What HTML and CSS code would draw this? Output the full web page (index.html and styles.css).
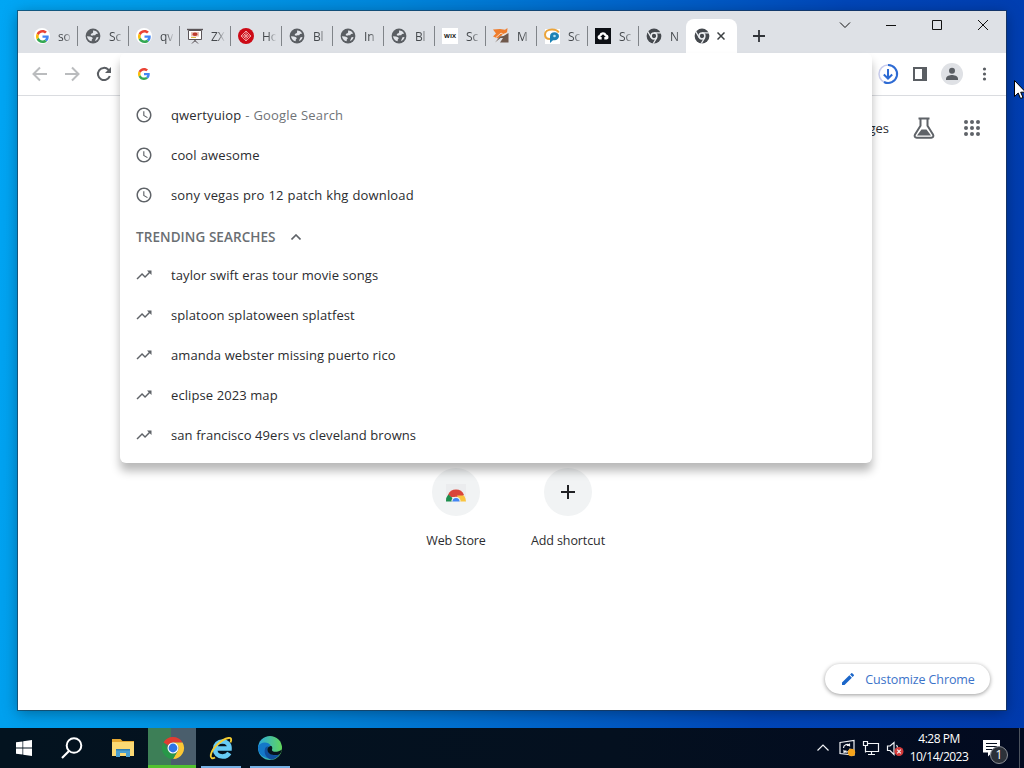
FILE: index.html
```
<!DOCTYPE html>
<html lang="en">
<head>
    <meta charset="UTF-8">
    <meta name="viewport" content="width=device-width, initial-scale=1.0">
    <title>New Tab</title>
    <link rel="stylesheet" href="styles.css">
</head>
<body>
    <!-- Shared icons -->
    <svg class="icon-defs" width="0" height="0">
        <symbol id="google" viewBox="0 0 48 48">
            <path fill="#EA4335" d="M24 9.5c3.54 0 6.71 1.22 9.21 3.6l6.85-6.85C35.9 2.38 30.47 0 24 0 14.62 0 6.51 5.38 2.56 13.22l7.98 6.19C12.43 13.72 17.74 9.5 24 9.5z"/>
            <path fill="#4285F4" d="M46.98 24.55c0-1.57-.15-3.09-.38-4.55H24v9.02h12.94c-.58 2.96-2.26 5.48-4.78 7.18l7.73 6c4.51-4.18 7.09-10.36 7.09-17.65z"/>
            <path fill="#FBBC05" d="M10.53 28.59c-.48-1.45-.76-2.99-.76-4.59s.27-3.14.76-4.59l-7.98-6.19C.92 16.46 0 20.12 0 24c0 3.88.92 7.54 2.56 10.78l7.97-6.19z"/>
            <path fill="#34A853" d="M24 48c6.48 0 11.93-2.13 15.89-5.81l-7.73-6c-2.15 1.45-4.92 2.3-8.16 2.3-6.26 0-11.57-4.22-13.47-9.91l-7.98 6.19C6.51 42.62 14.62 48 24 48z"/>
        </symbol>
        <symbol id="globe" viewBox="0 0 16 16">
            <circle cx="8" cy="8" r="7.4" fill="#5a5e63"/>
            <path fill="#e1e4e9" d="M8 2.500c2-.2 4.300 1 5 3.200L11 6l-.8 1.300-1.700-.1-1.500.6L5.600 7l.6-1.300 1.600-.6.3-1zM2 8.300l3 .2 2 .8.900 1-1 1-.3 2C4.200 12.800 2.200 11 2 8.300zM11.500 9.300l2-.3c-.3 1.800-1.200 3-2.600 3.800l-1-.4.800-1.200z"/>
        </symbol>
        <symbol id="chrome-mono" viewBox="0 0 16 16">
            <circle cx="8" cy="8" r="7.400" fill="#45494e"/>
            <circle cx="8" cy="8" r="2.900" fill="#45494e" stroke="#eceef1" stroke-width="1.500"/>
            <path stroke="#eceef1" stroke-width="1.300" fill="none" d="M8 4.900h7M5.300 9.600L1.700 3.500M10.700 9.600L7.300 15.500"/>
        </symbol>
        <symbol id="clock" viewBox="0 0 24 24">
            <path d="M11.990 2C6.470 2 2 6.480 2 12s4.470 10 9.990 10C17.520 22 22 17.520 22 12S17.520 2 11.990 2zM12 20c-4.420 0-8-3.580-8-8s3.580-8 8-8 8 3.580 8 8-3.580 8-8 8zm.5-13H11v6l5.250 3.150.75-1.230-4.500-2.670z"/>
        </symbol>
        <symbol id="trend" viewBox="0 0 24 24">
            <path d="M16 6l2.290 2.290-4.880 4.880-4-4L2 16.590 3.410 18l6-6 4 4 6.300-6.290L22 12V6z"/>
        </symbol>
    </svg>

    <div class="desktop">
        <div class="window">
            <!-- Tab strip -->
            <div class="tab-strip">
                <div class="tabs">
                    <div class="tab"><span class="favicon round"><svg width="13" height="13"><use href="#google"/></svg></span><span class="tab-title">so</span></div>
                    <div class="tab"><svg class="favicon"><use href="#globe"/></svg><span class="tab-title">Sc</span></div>
                    <div class="tab"><span class="favicon round"><svg width="13" height="13"><use href="#google"/></svg></span><span class="tab-title">qv</span></div>
                    <div class="tab">
                        <svg class="favicon" viewBox="0 0 16 16">
                            <path fill="#fff" stroke="#5b5558" d="M1.500 2.500h13v9h-13z"/>
                            <path stroke="#5b5558" stroke-width="1.400" d="M0 1.500h16"/>
                            <path fill="none" stroke="#5b5558" d="M8 12v2M8 12.500l-3 3M8 12.500l3 3"/>
                            <path fill="#e9c4b8" d="M4 4h8v4.500H4z"/>
                            <ellipse cx="8" cy="6.200" rx="2.600" ry="1.800" fill="#bd3a2c"/>
                            <path stroke="#d9bd42" d="M4 9.500h5"/>
                        </svg>
                        <span class="tab-title">ZX</span>
                    </div>
                    <div class="tab">
                        <svg class="favicon" viewBox="0 0 16 16">
                            <circle cx="8" cy="8" r="8" fill="#cd0a16"/>
                            <path fill="none" stroke="#f4b9b9" stroke-width=".8" d="M8 3L13 8 8 13 3 8zM8 5.500L10.500 8 8 10.500 5.500 8zM8 3v2.500M8 10.500V13M3 8h2.500M10.500 8H13M5.500 5.500l5 5M10.500 5.500l-5 5"/>
                        </svg>
                        <span class="tab-title">Ho</span>
                    </div>
                    <div class="tab"><svg class="favicon"><use href="#globe"/></svg><span class="tab-title">Bl</span></div>
                    <div class="tab"><svg class="favicon"><use href="#globe"/></svg><span class="tab-title">In</span></div>
                    <div class="tab"><svg class="favicon"><use href="#globe"/></svg><span class="tab-title">Bl</span></div>
                    <div class="tab"><span class="favicon wix">WIX</span><span class="tab-title">Sc</span></div>
                    <div class="tab">
                        <svg class="favicon" viewBox="0 0 16 16">
                            <path fill="#ef7d2d" d="M0 1.500l7-.5 5 .8L14.500 0 14 5l-3 .5L5 10.500 0 8.500l3-3z"/>
                            <path fill="#70594c" d="M15.500 5v9.500H7l3-4.500H7.500L2 14.500 7 8.500l3.500-.5z"/>
                            <path stroke="#f6e3d4" stroke-width=".9" d="M3 9.500l5-4.500 3 2 3-2.500" fill="none"/>
                        </svg>
                        <span class="tab-title">M</span>
                    </div>
                    <div class="tab">
                        <svg class="favicon" viewBox="0 0 16 16">
                            <path fill="#fff" d="M1 1h15v15H1z"/>
                            <path fill="none" stroke="#eba43a" stroke-width="2" d="M6 11C2 11 1 8.500 1 6.500 1 3.500 4 1.500 8 1.500s6 1.500 6.800 3"/>
                            <path fill="#1c83b5" d="M6 15V8.500C6 5.500 8 4.300 10.500 4.300S15 6 15 8.200s-2 4-4.500 4H9z"/>
                            <circle cx="10.500" cy="8" r="1.300" fill="#b5dff2"/>
                        </svg>
                        <span class="tab-title">Sc</span>
                    </div>
                    <div class="tab">
                        <svg class="favicon" viewBox="0 0 16 16">
                            <path fill="#0d1015" d="M0 0h16v16H0z"/>
                            <path fill="#fff" d="M4.500 11.500a2.300 2.300 0 0 1-.2-4.500A3.800 3.800 0 0 1 11.500 6.500a2.600 2.600 0 0 1 .3 5H9.300V9h1.500L8 6.300 5.200 9h1.500v2.500z"/>
                        </svg>
                        <span class="tab-title">Sc</span>
                    </div>
                    <div class="tab last"><svg class="favicon"><use href="#chrome-mono"/></svg><span class="tab-title">N</span></div>
                    <div class="tab active">
                        <svg class="favicon"><use href="#chrome-mono"/></svg>
                        <svg class="tab-close" width="8" height="8" viewBox="0 0 8 8"><path d="M.5.5l7 7M7.500.5l-7 7"/></svg>
                    </div>
                </div>
                <svg class="new-tab" width="12" height="12" viewBox="0 0 12 12"><path d="M6 0v12M0 6h12"/></svg>
                <div class="caption-buttons">
                    <svg viewBox="0 0 46 28"><path d="M18 11.500l5 5 5-5"/></svg>
                    <svg viewBox="0 0 46 28"><path d="M18 14.500h10"/></svg>
                    <svg viewBox="0 0 46 28"><path d="M18.500 9.500h9v9h-9z"/></svg>
                    <svg viewBox="0 0 46 28"><path d="M18 9l10 10M28 9L18 19"/></svg>
                </div>
            </div>

            <!-- Toolbar -->
            <div class="toolbar">
                <svg class="tool disabled" viewBox="0 0 32 32"><path d="M23 16H10M16 9.500L9.500 16l6.500 6.500"/></svg>
                <svg class="tool disabled" viewBox="0 0 32 32"><path d="M9 16h13M16 9.500l6.500 6.500-6.500 6.500"/></svg>
                <svg class="tool" viewBox="0 0 32 32"><path d="M21.800 18a6.100 6.100 0 1 1-1.400-6.300l1.600 1.800"/><path class="fill" d="M23 9v6h-6z"/></svg>
                <div class="toolbar-right">
                    <svg class="tool download" viewBox="0 0 32 32">
                        <circle cx="16" cy="16" r="9"/>
                        <path d="M16 7a9 9 0 1 1-4 17M16 11v9M11.800 16.500L16 20.500l4.200-4"/>
                    </svg>
                    <svg class="tool" viewBox="0 0 32 32"><path d="M10 10h12v12H10z"/><path class="fill" d="M18 9h5v14h-5z"/></svg>
                    <svg class="tool" viewBox="0 0 32 32">
                        <circle class="avatar-bg" cx="16" cy="16" r="11"/>
                        <circle class="fill" cx="16" cy="12.700" r="3"/>
                        <path class="fill" d="M10 22v-1.500c0-2.500 4-3.500 6-3.500s6 1 6 3.500V22z"/>
                    </svg>
                    <svg class="tool" viewBox="0 0 32 32"><circle class="fill" cx="16.500" cy="11" r="1.600"/><circle class="fill" cx="16.500" cy="16" r="1.600"/><circle class="fill" cx="16.500" cy="21" r="1.600"/></svg>
                </div>
            </div>

            <!-- New tab page -->
            <div class="page">
                <div class="page-header">
                    <span>Images</span>
                    <svg class="flask" width="24" height="24" viewBox="0 0 24 24">
                        <path fill="none" stroke="#5f6368" stroke-width="2" stroke-linejoin="round" d="M8.500 2.800v7L3 18.500c-1 2 0 3.200 1.700 3.200h14.600c1.700 0 2.700-1.200 1.700-3.200L15.500 9.800v-7M6.500 2.400h11"/>
                        <path fill="#5f6368" d="M9.500 13.500h5l4.500 6H5z"/>
                    </svg>
                    <svg class="apps" width="16" height="16" viewBox="0 0 16 16">
                        <g fill="#5f6368">
                            <circle cx="2" cy="2" r="2"/><circle cx="8" cy="2" r="2"/><circle cx="14" cy="2" r="2"/>
                            <circle cx="2" cy="8" r="2"/><circle cx="8" cy="8" r="2"/><circle cx="14" cy="8" r="2"/>
                            <circle cx="2" cy="14" r="2"/><circle cx="8" cy="14" r="2"/><circle cx="14" cy="14" r="2"/>
                        </g>
                    </svg>
                </div>

                <div class="shortcuts">
                    <div class="shortcut">
                        <div class="shortcut-icon">
                            <svg width="24" height="24" viewBox="0 0 24 24">
                                <path fill="#ebecee" d="M2 4h20v13H2z"/>
                                <path fill="#d9453a" d="M4 15a8.600 8.600 0 0 1 16 0l-3 2H7z"/>
                                <path fill="#1e8e4e" d="M4.300 14.500A9 9 0 0 0 2 21.500h6.500V18z"/>
                                <path fill="#f9c440" d="M13 15.500h7A9 9 0 0 1 22 21.500h-7z"/>
                                <path fill="#eceef0" d="M7.300 21.500a4.700 4.700 0 0 1 9.400 0z"/>
                                <path fill="#4285f4" d="M8.500 21.500a3.500 3.500 0 0 1 7 0z"/>
                            </svg>
                        </div>
                        <span>Web Store</span>
                    </div>
                    <div class="shortcut">
                        <div class="shortcut-icon">
                            <svg width="14" height="14" viewBox="0 0 14 14"><path stroke="#202124" stroke-width="2" d="M7 0v14M0 7h14"/></svg>
                        </div>
                        <span>Add shortcut</span>
                    </div>
                </div>

                <button class="customize">
                    <svg width="16" height="16" viewBox="0 0 24 24"><path fill="#1b66c9" d="M3 17.250V21h3.750L17.810 9.940l-3.750-3.750L3 17.250zM20.710 7.040a1 1 0 0 0 0-1.410l-2.340-2.340a1 1 0 0 0-1.410 0l-1.830 1.830 3.750 3.750 1.830-1.830z"/></svg>
                    <span>Customize Chrome</span>
                </button>
            </div>

            <!-- Address bar suggestions -->
            <div class="suggestions">
                <div class="omnibox"><svg width="12" height="12"><use href="#google"/></svg></div>
                <div class="suggestion history"><svg><use href="#clock"/></svg><span>qwertyuiop <em>- Google Search</em></span></div>
                <div class="suggestion history"><svg><use href="#clock"/></svg><span>cool awesome</span></div>
                <div class="suggestion history"><svg><use href="#clock"/></svg><span>sony vegas pro 12 patch khg download</span></div>
                <div class="suggestion-header">
                    <span>TRENDING SEARCHES</span>
                    <svg width="10" height="6" viewBox="0 0 10 6"><path d="M.5 5.500L5 1l4.500 4.500"/></svg>
                </div>
                <div class="suggestion"><svg><use href="#trend"/></svg><span>taylor swift eras tour movie songs</span></div>
                <div class="suggestion"><svg><use href="#trend"/></svg><span>splatoon splatoween splatfest</span></div>
                <div class="suggestion"><svg><use href="#trend"/></svg><span>amanda webster missing puerto rico</span></div>
                <div class="suggestion"><svg><use href="#trend"/></svg><span>eclipse 2023 map</span></div>
                <div class="suggestion"><svg><use href="#trend"/></svg><span>san francisco 49ers vs cleveland browns</span></div>
            </div>
        </div>

        <svg class="cursor" width="13" height="20" viewBox="0 0 13 20"><path fill="#fff" stroke="#000" d="M.5.5v16l3.700-3.500 2.300 5.500 2.500-1-2.300-5.300h5z"/></svg>
    </div>

    <!-- Taskbar -->
    <div class="taskbar">
        <div class="task">
            <svg width="16" height="16" viewBox="0 0 16 16"><path fill="#fff" d="M0 2.300l6.500-.9v6.200H0zM7.200 1.300L16 0v7.600H7.200zM0 8.400h6.500v6.200L0 13.700zM7.200 8.400H16V16l-8.800-1.300z"/></svg>
        </div>
        <div class="task search">
            <svg width="22" height="22" viewBox="0 0 22 22"><circle cx="13" cy="8.500" r="7.300" fill="none" stroke="#fff" stroke-width="2"/><path stroke="#fff" stroke-width="2.200" d="M8 14l-7 7"/></svg>
        </div>
        <div class="task">
            <svg width="22" height="20" viewBox="0 0 22 20">
                <path fill="#e5a832" d="M0 1h8.500l2 2H22v5H0z"/>
                <path fill="#fbd974" d="M0 4h22v14H0z"/>
                <path fill="#4a9fd0" d="M4 11h14v8h-4v-4H8v4H4z"/>
                <path fill="#2f7db0" d="M4 11h14v1.500H4z"/>
            </svg>
        </div>
        <div class="task current">
            <svg width="24" height="24" viewBox="0 0 48 48">
                <path fill="#e03c31" d="M24 2a22 22 0 0 1 19.100 11H24a11 11 0 0 0-9.600 5.600L4.900 13A22 22 0 0 1 24 2z"/>
                <path fill="#fbc734" d="M43.100 13A22 22 0 0 1 24 46l9.500-16.500A11 11 0 0 0 33.500 18.500L24 13z"/>
                <path fill="#279848" d="M4.900 13l9.600 16.500A11 11 0 0 0 24 35c3 0 7-2 9.500-5.500L24 46A22 22 0 0 1 4.900 13z"/>
                <circle cx="24" cy="24" r="11" fill="#fff"/>
                <circle cx="24" cy="24" r="8.800" fill="#2f74e6"/>
            </svg>
        </div>
        <div class="task open">
            <svg width="24" height="24" viewBox="0 0 24 24">
                <path fill="none" stroke="#67cbf4" stroke-width="4.600" d="M6 12.500h14.500c.2-4.500-2.800-7-7-7S6 8.500 6 13s3.200 7.500 7.500 7.500c3.300 0 5.500-1.200 6.800-3.500"/>
                <path fill="none" stroke="#f4cd32" stroke-width="1.900" d="M21.500 6.500c1.500-3.500.5-5-2-4.500C12 3.500 3 12.500 1.800 19c-.6 3.500 1.700 4 4.200 2.500"/>
            </svg>
        </div>
        <div class="task open">
            <svg width="24" height="24" viewBox="0 0 24 24">
                <defs>
                    <linearGradient id="edge-top" x1="0" x2="1"><stop offset="0" stop-color="#2ba9df"/><stop offset="1" stop-color="#61d65b"/></linearGradient>
                </defs>
                <circle cx="12" cy="12" r="12" fill="url(#edge-top)"/>
                <path fill="#1478c8" d="M0 11c1.500-5 10-6.500 13-1-3 0-4 2-3.500 4 .8 4 6 5.500 12 4A12 12 0 0 1 0 11z"/>
                <path fill="#114f9d" d="M8 11c-3 4-1 11 5.500 12.800 3.500-.5 6.500-3 8-5.300-6 2-11.500-.5-12-4.500-.2-1.500.3-3 1.500-4z"/>
                <path fill="#06131d" d="M13.500 10c2 3-.5 3.500 1 5 2 1.500 6 1 9.500-1.500-.5 2-1.500 4-2.500 5-6 1.500-11.200 0-12-4-.4-2 .5-4.500 4-4.500z"/>
            </svg>
        </div>

        <div class="tray">
            <svg class="tray-icon" viewBox="0 0 24 24"><path d="M6.500 14.500L12 9l5.500 5.500"/></svg>
            <svg class="tray-icon" viewBox="0 0 24 24">
                <path d="M5 6.500l14-2v14.500l-14-1.500zM8.500 12a3.500 3.500 0 0 1 6-2.500V7.500M14.500 9.500h-2.500M15 12.500a3.500 3.500 0 0 1-6 2.500v2M9 15h2.500"/>
                <circle class="alert-dot" cx="16.500" cy="16.500" r="3.700"/>
            </svg>
            <svg class="tray-icon" viewBox="0 0 24 24"><path d="M9 7.500h10.500v8H6.500v-5M4.500 5.500h4v4h-4zM6.500 9.500v7M12.500 15.500v3M9 18.500h7"/></svg>
            <svg class="tray-icon" viewBox="0 0 24 24">
                <path d="M4.500 10v4.500h2.500l4 4v-12l-4 3.500zM13.500 9a5 5 0 0 1 1 3"/>
                <circle class="muted-dot" cx="16" cy="15.500" r="4.500"/>
                <path d="M14.200 13.700l3.600 3.600M17.800 13.700l-3.600 3.600"/>
            </svg>
            <div class="time"><span>4:28 PM</span><span>10/14/2023</span></div>
            <div class="notifications">
                <svg width="17" height="17" viewBox="0 0 17 17"><path fill="#fff" d="M0 0h17v12.500H9L5 16.500v-4H0z"/><path stroke="#06101f" d="M3 3.500h11M3 6.500h11M3 9.500h8"/></svg>
                <span class="badge">1</span>
            </div>
            <div class="show-desktop"></div>
        </div>
    </div>
</body>
</html>
```
FILE: styles.css
```
/* General Styles */
* {
    box-sizing: border-box;
}

body {
    margin: 0;
    width: 1024px;
    height: 768px;
    overflow: hidden;
    display: flex;
    flex-direction: column;
    font-family: "Open Sans", "Noto Sans", sans-serif;
    font-size: 13px;
    color: #2b2c2f;
}

.icon-defs {
    position: absolute;
}

/* Desktop */
.desktop {
    position: relative;
    flex: 1;
    background: linear-gradient(97deg, #00a6f4 0%, #009be9 15%, #0085da 36%, #0066cb 55%, #0046b8 76%, #003aad 100%);
}

.window {
    position: absolute;
    left: 18px;
    top: 11px;
    width: 988px;
    height: 699px;
    display: flex;
    flex-direction: column;
    background-color: #fff;
    box-shadow: 0 0 0 1px rgba(30, 50, 70, 0.6), 0 3px 14px rgba(0, 0, 0, 0.35);
}

.cursor {
    position: absolute;
    left: 1014px;
    top: 80px;
}

/* Tab strip */
.tab-strip {
    display: flex;
    height: 42px;
    background-color: #dee1e6;
}

.tabs {
    display: flex;
    align-items: flex-end;
    padding-left: 9px;
}

.tab {
    display: flex;
    align-items: center;
    width: 51px;
    height: 34px;
    padding-left: 7px;
    position: relative;
}

.tab::after {
    content: "";
    position: absolute;
    right: 0;
    top: 7px;
    width: 1px;
    height: 20px;
    background-color: #808489;
}

.tab.last::after,
.tab.active::after {
    display: none;
}

.tab.last {
    width: 47px;
}

.tab.active {
    background-color: #fff;
    border-radius: 8px 8px 0 0;
    padding-left: 8px;
}

.favicon {
    width: 16px;
    height: 16px;
    flex: none;
}

.favicon.round {
    display: flex;
    align-items: center;
    justify-content: center;
    background-color: #fff;
    border-radius: 50%;
}

.favicon.wix {
    background-color: #fff;
    color: #111;
    font-size: 6px;
    font-weight: bold;
    line-height: 16px;
    text-align: center;
}

.tab-title {
    width: 15px;
    margin-left: 8px;
    white-space: nowrap;
    font-size: 12px;
    letter-spacing: -0.2px;
    color: #45494d;
    -webkit-mask-image: linear-gradient(90deg, #000 40%, transparent 95%);
    mask-image: linear-gradient(90deg, #000 40%, transparent 95%);
}

.tab-close {
    margin-left: 7px;
    stroke: #3c4043;
    stroke-width: 1.5;
}

.new-tab {
    margin: 19px 0 0 16px;
    stroke: #303338;
    stroke-width: 1.8;
}

.caption-buttons {
    display: flex;
    margin-left: auto;
}

.caption-buttons svg {
    width: 46px;
    height: 28px;
    fill: none;
    stroke: #111;
}

/* Toolbar */
.toolbar {
    display: flex;
    align-items: center;
    height: 43px;
    padding: 0 6px;
    border-bottom: 1px solid #dadce0;
}

.toolbar-right {
    display: flex;
    margin-left: auto;
}

.tool {
    width: 32px;
    height: 32px;
    fill: none;
    stroke: #5a5e63;
    stroke-width: 2;
}

.tool.disabled {
    stroke: #babcbe;
}

.tool.download {
    stroke: #2d6bd3;
}

.tool.download circle {
    stroke: #c9cdee;
    stroke-width: 1.5;
}

.tool .fill {
    fill: #5a5e63;
    stroke: none;
}

.tool .avatar-bg {
    fill: #dfe1e5;
    stroke: none;
}

/* New tab page */
.page {
    flex: 1;
    display: flex;
    flex-direction: column;
    align-items: center;
}

.page-header {
    display: flex;
    align-items: center;
    align-self: stretch;
    justify-content: flex-end;
    height: 64px;
    padding-right: 26px;
}

.flask {
    margin-left: 23px;
}

.apps {
    margin-left: 28px;
}

.shortcuts {
    display: flex;
    margin-top: 308px;
}

.shortcut {
    width: 112px;
    display: flex;
    flex-direction: column;
    align-items: center;
    font-size: 12.5px;
    letter-spacing: -0.1px;
}

.shortcut-icon {
    display: flex;
    align-items: center;
    justify-content: center;
    width: 48px;
    height: 48px;
    margin-bottom: 16px;
    border-radius: 50%;
    background-color: #f1f3f4;
}

.customize {
    display: flex;
    align-items: center;
    justify-content: center;
    gap: 9px;
    align-self: flex-end;
    width: 165px;
    height: 30px;
    margin: auto 16px 16px 0;
    padding: 0;
    border: none;
    border-radius: 15px;
    background-color: #fff;
    box-shadow: 0 1px 4px rgba(0, 0, 0, 0.4);
    font-family: inherit;
    font-size: 12.5px;
    letter-spacing: -0.1px;
    color: #3c73c9;
}

/* Suggestions dropdown */
.suggestions {
    position: absolute;
    left: 102px;
    top: 42px;
    width: 752px;
    height: 410px;
    background-color: #fff;
    border-radius: 6px;
    box-shadow: 0 8px 10px rgba(0, 0, 0, 0.28);
}

.omnibox {
    display: flex;
    align-items: center;
    height: 42px;
    padding-left: 18px;
}

.suggestion {
    display: flex;
    align-items: center;
    height: 40px;
    padding-left: 15px;
    letter-spacing: 0.09px;
}

.suggestion.history {
    letter-spacing: 0.15px;
    word-spacing: 0.4px;
}

.suggestion svg {
    width: 18px;
    height: 18px;
    margin-right: 18px;
    fill: #5f6368;
}

.suggestion em {
    font-style: normal;
    color: #6f7377;
}

.suggestion-header {
    display: flex;
    align-items: center;
    gap: 15px;
    height: 40px;
    padding: 4px 0 0 16px;
    font-size: 13.5px;
    font-weight: 600;
    letter-spacing: 0.07px;
    color: #6a6e72;
}

.suggestion-header svg {
    fill: none;
    stroke: #5f6368;
    stroke-width: 1.6;
}

/* Taskbar */
.taskbar {
    display: flex;
    gap: 1px;
    height: 40px;
    background: linear-gradient(90deg, #03131f, #04101f 60%, #020a20);
}

.task {
    display: flex;
    align-items: center;
    justify-content: center;
    width: 48px;
    position: relative;
}

.task:first-child {
    margin-right: -1px;
}

.task.search {
    margin-right: 2px;
}

.task.current {
    background: linear-gradient(90deg, #3d7f57 48%, #4a5e6c 48%);
    border-bottom: 3px solid #52c22f;
    padding-top: 3px;
    padding-left: 2px;
}

.task.open::after {
    content: "";
    position: absolute;
    left: 4px;
    bottom: 0;
    width: 40px;
    height: 2px;
    background-color: #76b0e4;
}

.tray {
    display: flex;
    align-items: center;
    margin-left: auto;
    color: #fff;
}

.tray-icon {
    width: 24px;
    height: 24px;
    fill: none;
    stroke: #f2f4f7;
    stroke-width: 1.2;
}

.alert-dot {
    fill: #f5a31b;
    stroke: none;
}

.muted-dot {
    fill: #d33a3a;
    stroke: none;
}

.time {
    display: flex;
    flex-direction: column;
    align-items: center;
    width: 64px;
    font-size: 12px;
    line-height: 18px;
    letter-spacing: -0.5px;
    white-space: nowrap;
}

.notifications {
    position: relative;
    width: 48px;
    height: 40px;
    padding: 12px 0 0 12px;
}

.badge {
    position: absolute;
    left: 19px;
    top: 18px;
    width: 18px;
    height: 18px;
    border: 1px solid #8b8f96;
    border-radius: 50%;
    background-color: #2c3139;
    font-size: 12px;
    line-height: 16px;
    text-align: center;
}

.show-desktop {
    width: 5px;
    height: 40px;
    border-left: 1px solid #4c535e;
}
```
